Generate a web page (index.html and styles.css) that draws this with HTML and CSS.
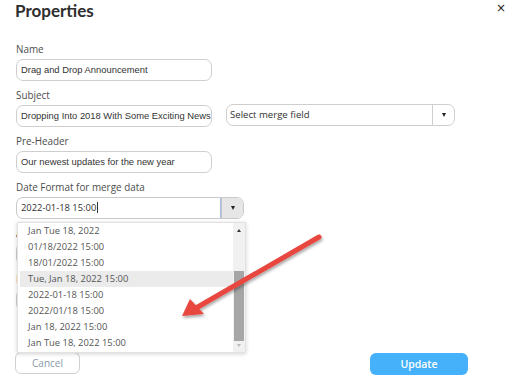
FILE: index.html
```html
<!DOCTYPE html>
<html>
<head>
<meta charset="utf-8">
<link rel="stylesheet" href="styles.css">
</head>
<body>
<div class="dialog">
  <header class="head">
    <h1 class="title">Properties</h1>
    <span class="close">×</span>
  </header>
  <form class="form">
    <div class="field">
      <label class="label">Name</label>
      <div class="input w196">Drag and Drop Announcement</div>
    </div>
    <div class="field">
      <label class="label">Subject</label>
      <div class="row">
        <div class="input w196">Dropping Into 2018 With Some Exciting News</div>
        <div class="select merge">
          <span class="sel-text">Select merge field</span>
          <span class="sel-btn"><span class="tri"></span></span>
        </div>
      </div>
    </div>
    <div class="field">
      <label class="label">Pre-Header</label>
      <div class="input w196">Our newest updates for the new year</div>
    </div>
    <div class="field datefield">
      <label class="label">Date Format for merge data</label>
      <div class="select date">
        <span class="sel-text poppins">2022-01-18 15:00<span class="caret"></span></span>
        <span class="sel-btn grey"><span class="tri"></span></span>
      </div>
      <div class="dropdown">
        <ul class="list">
          <li>Jan Tue 18, 2022</li>
          <li>01/18/2022 15:00</li>
          <li>18/01/2022 15:00</li>
          <li class="hl">Tue, Jan 18, 2022 15:00</li>
          <li>2022-01-18 15:00</li>
          <li>2022/01/18 15:00</li>
          <li>Jan 18, 2022 15:00</li>
          <li>Jan Tue 18, 2022 15:00</li>
        </ul>
        <div class="scroll">
          <span class="up"></span>
          <span class="thumb"></span>
          <span class="down"></span>
        </div>
      </div>
    </div>
    <div class="field">
      <label class="label">Alt</label>
      <div class="input w196"></div>
    </div>
    <div class="field">
      <label class="label">Id</label>
      <div class="input w196"></div>
    </div>
    <div class="footer">
      <button type="button" class="btn cancel">Cancel</button>
      <button type="button" class="btn update">Update</button>
    </div>
  </form>
  <svg class="arrow" width="512" height="388" viewBox="0 0 512 388">
    <defs>
      <filter id="sh" x="-20%" y="-20%" width="140%" height="140%">
        <feDropShadow dx="1" dy="2" stdDeviation="1.5" flood-color="#000" flood-opacity="0.35"/>
      </filter>
    </defs>
    <g filter="url(#sh)">
      <line x1="319" y1="237" x2="196" y2="308" stroke="#e8473f" stroke-width="5" stroke-linecap="round"/>
      <polygon points="182,316 190,299 204,314" fill="#e8473f"/>
    </g>
  </svg>
</div>
</body>
</html>
```
FILE: styles.css
```css
* { box-sizing: border-box; }
html, body { margin: 0; padding: 0; background: #fff; }
body { width: 512px; height: 388px; overflow: hidden; font-family: "Open Sans", "Noto Sans", sans-serif; color: #333; }
.dialog { position: relative; width: 512px; height: 388px; }
.head { display: flex; justify-content: space-between; align-items: flex-start; padding: 0 6px 0 15px; height: 42px; }
.title { margin: 0; padding-top: 1px; font-family: Lato, "Open Sans", sans-serif; font-size: 17px; line-height: 19px; font-weight: 700; color: #2e2e2e; }
.close { font-family: "DejaVu Sans", sans-serif; font-size: 12px; line-height: 14px; color: #222; margin-top: 1px; }
.form { padding-left: 16px; margin: 0; }
.field { position: relative; height: 46px; }
.label { display: block; height: 14px; line-height: 14px; font-size: 9.9px; color: #4d4d4d; margin-bottom: 3px; }
.input { height: 22px; border: 1px solid #cfcfcf; border-radius: 7px; padding: 0 4px; font-family: "Liberation Sans", Arial, sans-serif; font-size: 9.4px; line-height: 20px; color: #333; white-space: nowrap; overflow: hidden; }
.w196 { width: 196px; }
.row { display: flex; gap: 14px; }
.merge { margin-top: -1px; }
.select { display: flex; height: 22px; border: 1px solid #cfcfcf; border-radius: 7px; overflow: hidden; }
.merge { width: 229px; }
.date { width: 228px; border-color: #c9c9c9; }
.sel-text { flex: 1; padding: 0 3px; font-size: 9.4px; line-height: 20px; color: #333; white-space: nowrap; }
.merge .sel-text { font-size: 9.6px; }
.date .sel-text { border: 1px solid #a6bfe2; border-radius: 6px 0 0 6px; margin: -1px 0 -1px -1px; padding-left: 4px; line-height: 20px; font-size: 9.4px; color: #333; }
.caret { display: inline-block; width: 1px; height: 11px; background: #333; vertical-align: -2px; margin-left: 1px; }
.sel-btn { width: 22px; border-left: 1px solid #cfcfcf; display: flex; align-items: center; justify-content: center; }
.grey { background: #e6e6e6; border-left-color: #c4c4c4; }
.tri { width: 0; height: 0; border-left: 2.5px solid transparent; border-right: 2.5px solid transparent; border-top: 4px solid #222; }
.dropdown { position: absolute; left: 1px; top: 42px; width: 229px; height: 131px; background: #fff; border: 1px solid #e2e2e2; box-shadow: 0 1px 4px rgba(0,0,0,0.18); display: flex; z-index: 5; }
.list { list-style: none; margin: 0; padding: 0 0 0 2px; flex: 1; }
.list li { height: 16px; line-height: 16px; padding-left: 8px; font-size: 9.4px; color: #555; white-space: nowrap; }
.list li.hl { background: #ebebeb; }
.scroll { width: 12px; background: #f1f1f1; position: relative; }
.up, .down { position: absolute; left: 4px; width: 0; height: 0; border-left: 2px solid transparent; border-right: 2px solid transparent; }
.up { top: 6px; border-bottom: 3px solid #333; }
.down { bottom: 5px; border-top: 3px solid #bbb; }
.thumb { position: absolute; left: 1px; right: 1px; top: 48px; height: 70px; background: #a6a6a6; }
.footer { display: flex; justify-content: space-between; align-items: flex-start; padding-right: 44px; margin-top: 34px; }
.btn { height: 22px; border-radius: 6px; font-family: "Open Sans", sans-serif; font-size: 10px; padding: 0; cursor: pointer; }
.cancel { width: 65px; margin-left: -1px; background: #fff; border: 1px solid #d0d0d0; color: #8899aa; }
.update { width: 98px; margin-top: 1px; background: #45b1fb; border: none; color: #fff; font-weight: 600; font-size: 10.5px; }
.arrow { position: absolute; left: 0; top: 0; pointer-events: none; z-index: 10; }
```
